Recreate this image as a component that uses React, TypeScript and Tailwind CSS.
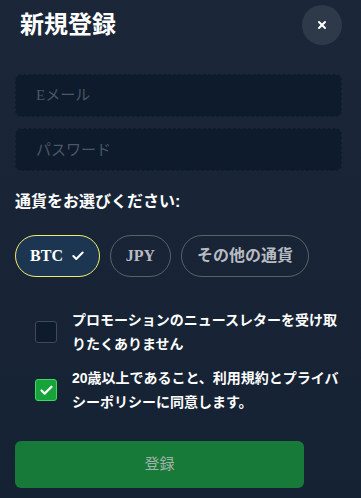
import { Check, X } from 'lucide-react';

const sans = { fontFamily: '"Liberation Sans", "Noto Sans CJK JP", sans-serif' };

export default function App() {
  return (
    <div
      className="w-[361px] h-[498px] overflow-hidden bg-gradient-to-b from-[#1b2739] to-[#152234] text-white"
      style={sans}
    >
      {/* Header */}
      <div className="flex items-center justify-between pl-5 pr-[19px] pt-[5px]">
        <h1 className="text-[24px] font-bold leading-none font-['Liberation_Serif','Noto_Sans_CJK_JP',serif]">
          新規登録
        </h1>
        <button className="w-10 h-10 rounded-full bg-[#2e3a4a] flex items-center justify-center">
          <X className="w-3 h-3 text-white" strokeWidth={4} />
        </button>
      </div>

      {/* Inputs */}
      <div className="flex flex-col gap-[11px] px-[15px] pt-[29px] pr-[19px]">
        <input
          placeholder="Eメール"
          className="h-[43px] rounded-md bg-[#0d1b2d] border border-dashed border-[#16263a] px-5 text-[15px] text-white placeholder:text-[#4b5667] outline-none font-['Liberation_Serif','Noto_Sans_CJK_JP',serif]"
        />
        <input
          placeholder="パスワード"
          className="h-[43px] rounded-md bg-[#0d1b2d] border border-dashed border-[#16263a] px-5 text-[15px] text-white placeholder:text-[#4b5667] outline-none"
        />
      </div>

      {/* Currency */}
      <div className="px-[15px] pt-[21px] text-[16px] font-bold leading-5">通貨をお選びください:</div>
      <div className="flex gap-[10px] px-[15px] pt-[23px]">
        <button className="h-[42px] w-[85px] rounded-full border border-[#f3ec6b] bg-[#1c3550] flex items-center justify-center gap-2 text-[16px] font-bold font-['Liberation_Serif',serif]">
          BTC
          <Check className="w-[14px] h-[14px]" strokeWidth={3.5} />
        </button>
        <button className="h-[42px] w-[61px] rounded-full border border-[#5c6168] flex items-center justify-center text-[16px] font-bold text-[#b8bcc2] font-['Liberation_Serif',serif]">
          JPY
        </button>
        <button className="h-[42px] w-[128px] rounded-full border border-[#5c6168] flex items-center justify-center text-[16px] font-bold text-[#b8bcc2]">
          その他の通貨
        </button>
      </div>

      {/* Checkboxes */}
      <div className="flex flex-col gap-[10px] pl-[35px] pr-4 pt-[31px]">
        <label className="flex items-center gap-[15px]">
          <span className="shrink-0 w-[22px] h-[22px] rounded-[3px] border border-[#3e4a5a] bg-[#0d1b2d]" />
          <span className="text-[14px] font-bold leading-6">
            プロモーションのニュースレターを受け取りたくありません
          </span>
        </label>
        <label className="flex items-center gap-[15px]">
          <span className="shrink-0 w-[22px] h-[22px] rounded-[3px] border border-[#3fd764] bg-[#16a33a] flex items-center justify-center">
            <Check className="w-[15px] h-[15px] text-white" strokeWidth={3.5} />
          </span>
          <span className="text-[14px] font-bold leading-6">
            20歳以上であること、利用規約とプライバシーポリシーに同意します。
          </span>
        </label>
      </div>

      {/* Submit */}
      <div className="px-[15px] pt-[27px]">
        <button className="w-[289px] h-[47px] rounded-md bg-[#177a38] text-[15px] text-[#a3b1a8]">
          登録
        </button>
      </div>
    </div>
  );
}
